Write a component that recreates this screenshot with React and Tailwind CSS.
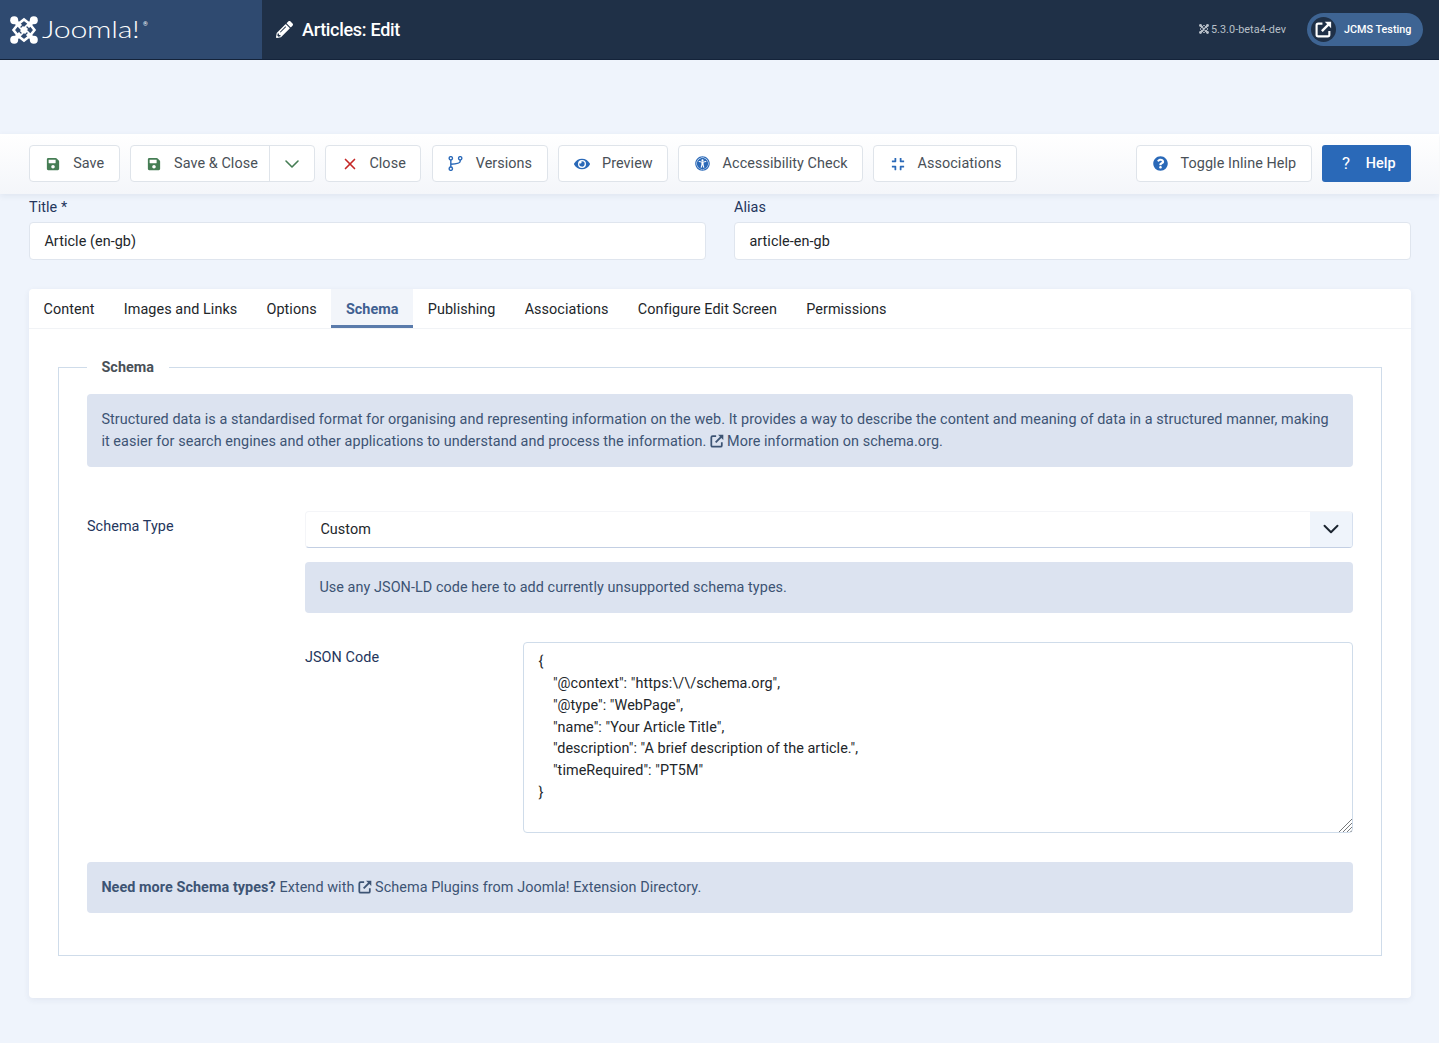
import {
  FaSave,
  FaEye,
  FaUniversalAccess,
  FaCompress,
  FaQuestionCircle,
  FaPencilAlt,
} from "react-icons/fa";
import { ChevronDown, X } from "lucide-react";

function JoomlaMark({ className, cut = "#2f4a70" }) {
  return (
    <svg viewBox="0 0 28 28" className={className} fill="none" stroke="currentColor" strokeLinecap="round">
      <circle cx="4.200" cy="4.200" r="4" fill="currentColor" stroke="none" />
      <circle cx="23.800" cy="4.200" r="4" fill="currentColor" stroke="none" />
      <circle cx="4.200" cy="23.800" r="4" fill="currentColor" stroke="none" />
      <circle cx="23.800" cy="23.800" r="4" fill="currentColor" stroke="none" />
      <path d="M5 5L23 23M23 5L5 23" strokeWidth="4.500" />
      <path d="M7 9L14 3.500L21 9M7 19L14 24.500L21 19" strokeWidth="2.600" />
      <path d="M9 7L3.500 14L9 21M19 7L24.500 14L19 21" strokeWidth="2.600" />
      <path d="M14 8L11 11M14 20L17 17M8 14L11 17M20 14L17 11" stroke={cut} strokeWidth="1.300" />
    </svg>
  );
}

function ExternalIcon({ className }) {
  return (
    <svg viewBox="0 0 16 16" className={className} fill="none" stroke="currentColor">
      <path d="M7 2.500H3a1.500 1.500 0 0 0-1.500 1.500v9A1.500 1.500 0 0 0 3 14.500h9a1.500 1.500 0 0 0 1.500-1.500V9.500" strokeWidth="2" />
      <path d="M6.500 9.500L13.500 2.500" strokeWidth="2.200" />
      <path d="M9.200 0.800h6v6z" fill="currentColor" stroke="none" />
    </svg>
  );
}

function BranchIcon({ size }) {
  return (
    <svg viewBox="0 0 16 16" width={size} height={size} fill="none" stroke="currentColor" strokeWidth="1.500">
      <circle cx="3" cy="2.500" r="1.800" />
      <circle cx="3" cy="13.500" r="1.800" />
      <circle cx="13" cy="2.500" r="1.800" />
      <path d="M3 4.300V11.700M13 4.300V5.500C13 8 9 8.500 3 8.800" />
    </svg>
  );
}

function CloseIcon({ size }) {
  return <X size={size} strokeWidth={2.200} />;
}

function ToolButton({ icon: Icon, iconClass, label, size = 14 }) {
  return (
    <button className="flex h-[36.500px] items-center rounded-[4px] border border-[#dfe4ea] bg-white px-[14.400px] pt-[1px] text-[#495057]">
      <span className={`-mt-[1px] mr-[10.800px] flex w-[18px] justify-center ${iconClass}`}>
        <Icon size={size} />
      </span>
      {label}
    </button>
  );
}

const tabs = ["Content", "Images and Links", "Options", "Schema", "Publishing", "Associations", "Configure Edit Screen", "Permissions"];

const jsonCode = `{
    "@context": "https:\\/\\/schema.org",
    "@type": "WebPage",
    "name": "Your Article Title",
    "description": "A brief description of the article.",
    "timeRequired": "PT5M"
}`;

export default function App() {
  return (
    <div className="h-[1044px] w-[1440px] border-b border-r border-white bg-[#eff4fc] font-['Roboto',sans-serif] text-[14.400px] leading-[21.800px] tracking-[0.065px] text-[#22262a]">
      {/* Header */}
      <header className="flex h-[60px] items-stretch border-b border-[#14233a] bg-[#1f3047] text-white">
        <div className="flex w-[262px] items-center bg-[#2f4a70] pl-[10px]">
          <JoomlaMark className="h-[28px] w-[28px] text-white" />
          <span className="ml-[4px] inline-block w-[101px] origin-left scale-x-[1.320] font-['Lato',sans-serif] text-[23px] font-light leading-none tracking-[-0.2px]">Joomla!</span>
          <span className="mb-[12px] text-[6px] leading-none">®</span>
        </div>
        <div className="flex flex-1 items-center pl-[14px]">
          <FaPencilAlt size={17} className="mr-[9px] text-white" />
          <h1 className="text-[18px] font-medium leading-none tracking-[-0.3px]">Articles: Edit</h1>
        </div>
        <div className="flex items-center">
          <span className="flex items-center text-[10.800px] text-[#b9c0c9]">
            <JoomlaMark cut="#1f3047" className="mr-[2px] h-[10px] w-[10px]" />
            5.3.0-beta4-dev
          </span>
          <div className="ml-[21px] mr-[16px] flex h-[33px] w-[116px] items-center rounded-full bg-[#3e6493] pl-[4px]">
            <span className="flex h-[25px] w-[25px] items-center justify-center rounded-full bg-[#1f3047]">
              <ExternalIcon className="h-[17px] w-[17px] text-white" />
            </span>
            <span className="ml-[8px] text-[10.800px] font-medium tracking-normal">JCMS Testing</span>
          </div>
        </div>
      </header>

      {/* Toolbar */}
      <div className="mt-[74px] flex h-[60px] items-center justify-between bg-gradient-to-b from-white to-[#f4f6fa] pb-[1px] pl-[29px] pr-[28px] shadow-[0_2px_6px_rgba(40,60,100,0.08)]">
        <div className="flex items-center gap-[10.300px]">
          <ToolButton icon={FaSave} iconClass="text-[#457d54]" label="Save" size={14} />
          <div className="flex h-[36.500px] items-center rounded-[4px] border border-[#dfe4ea] bg-white text-[#495057]">
            <span className="flex h-full items-center pl-[14.400px] pr-[11px] pt-[1px]">
              <span className="-mt-[1px] mr-[10.800px] flex w-[18px] justify-center text-[#457d54]">
                <FaSave size={14} />
              </span>
              Save &amp; Close
            </span>
            <span className="flex h-full w-[45px] items-center justify-center border-l border-[#dfe4ea] text-[#457d54]">
              <ChevronDown size={24} strokeWidth={1.600} />
            </span>
          </div>
          <ToolButton icon={CloseIcon} iconClass="text-[#c52827]" label="Close" size={22} />
          <ToolButton icon={BranchIcon} iconClass="text-[#2a69b8]" label="Versions" size={15} />
          <ToolButton icon={FaEye} iconClass="text-[#2a69b8]" label="Preview" size={16} />
          <ToolButton icon={FaUniversalAccess} iconClass="text-[#2a69b8]" label="Accessibility Check" size={15} />
          <ToolButton icon={FaCompress} iconClass="text-[#2a69b8]" label="Associations" size={14} />
        </div>
        <div className="flex items-center gap-[10.400px]">
          <ToolButton icon={FaQuestionCircle} iconClass="text-[#2a69b8]" label="Toggle Inline Help" size={15} />
          <button className="flex h-[36.500px] w-[89px] items-center rounded-[3px] bg-[#2a69b8] pl-[15px] pt-[1px] font-medium text-white">
            <span className="mr-[10.800px] flex w-[18px] justify-center text-[17px] font-normal">?</span>
            Help
          </button>
        </div>
      </div>

      {/* Title + Alias */}
      <div className="flex gap-[28px] pl-[29px] pr-[28px] pt-[3px]">
        <div className="w-[677px]">
          <label className="block text-[#24365c]">Title *</label>
          <input
            readOnly
            value="Article (en-gb)"
            className="mt-[3px] h-[38px] w-full rounded-[4px] border border-[#dfe5ee] bg-white px-[14.400px] pt-[1px] text-[#22262a] outline-none"
          />
        </div>
        <div className="flex-1">
          <label className="block text-[#24365c]">Alias</label>
          <input
            readOnly
            value="article-en-gb"
            className="mt-[3px] h-[38px] w-full rounded-[4px] border border-[#dfe5ee] bg-white px-[14.400px] pt-[1px] text-[#22262a] outline-none"
          />
        </div>
      </div>

      {/* Card */}
      <div className="ml-[29px] mr-[28px] mt-[29px] h-[709px] rounded-[4px] bg-white shadow-[0_2px_6px_rgba(40,60,100,0.07)]">
        <div className="flex h-[40px] border-b border-[#f1f3f6]">
          {tabs.map((t) =>
            t === "Schema" ? (
              <div key={t} className="flex items-center border-b-[3px] border-[#5a7bab] bg-[#f2f5fa] px-[14.600px] pt-[7px] font-bold text-[#3f6091]">
                {t}
              </div>
            ) : (
              <div key={t} className="flex items-center px-[14.600px] pt-[4px] text-[#22262a]">
                {t}
              </div>
            )
          )}
        </div>

        <fieldset className="mx-[29px] mt-[28px] h-[599px] border border-[#cfdcea] px-[28px]">
          <legend className="px-[14.400px] font-bold text-[#495057]">Schema</legend>

          <div className="mt-[15.500px] rounded-[4px] bg-[#dce3f0] px-[14.400px] py-[14.700px] text-[#3d5474]">
            Structured data is a standardised format for organising and representing information on the web. It provides a way to describe the content and meaning of data in a structured manner, making it easier for search engines and other applications to understand and process the information.{" "}
            <ExternalIcon className="mr-[3px] inline-block h-[14px] w-[14px] align-[-2px]" />More information on schema.org.
          </div>

          <div className="mt-[43.500px] flex">
            <label className="w-[218px] shrink-0 pt-[5px] text-[#24365c]">Schema Type</label>
            <div className="flex-1">
              <div className="flex h-[37px] items-stretch overflow-hidden rounded-[4px] border border-[#f4f5f8] border-b-[#c3cfe3] border-r-[#d6e0ef] bg-white">
                <span className="flex flex-1 items-center pl-[14.400px] pt-[1px]">Custom</span>
                <span className="flex w-[42px] items-center justify-center bg-[#eff4fb] text-[#1c2530]">
                  <ChevronDown size={26} strokeWidth={1.800} />
                </span>
              </div>
              <div className="mt-[14.400px] rounded-[4px] bg-[#dce3f0] px-[14.400px] pb-[13.900px] pt-[15.500px] text-[#3d5474]">
                Use any JSON-LD code here to add currently unsupported schema types.
              </div>
              <div className="mt-[29px] flex">
                <label className="w-[218px] shrink-0 pt-[5px] text-[#24365c]">JSON Code</label>
                <div className="relative flex-1">
                  <textarea
                    readOnly
                    value={jsonCode}
                    className="block h-[191px] w-full resize-none rounded-[4px] border border-[#cfdcea] bg-white px-[14.400px] pb-[7px] pt-[8px] font-['Roboto',sans-serif] text-[#22262a] outline-none"
                  />
                  <svg viewBox="0 0 14 14" className="absolute bottom-[1px] right-[1px] h-[14px] w-[14px]" stroke="#77797c" strokeWidth="1">
                    <path d="M1 14L14 1M5 14L14 5M9 14L14 9M12.500 14L14 12.500" />
                  </svg>
                </div>
              </div>
            </div>
          </div>

          <div className="mt-[29px] rounded-[4px] bg-[#dce3f0] px-[14.400px] py-[14.700px] text-[#3d5474]">
            <strong className="font-bold">Need more Schema types?</strong> Extend with{" "}
            <ExternalIcon className="mr-[3px] inline-block h-[14px] w-[14px] align-[-2px]" />Schema Plugins from Joomla! Extension Directory.
          </div>
        </fieldset>
      </div>
    </div>
  );
}
